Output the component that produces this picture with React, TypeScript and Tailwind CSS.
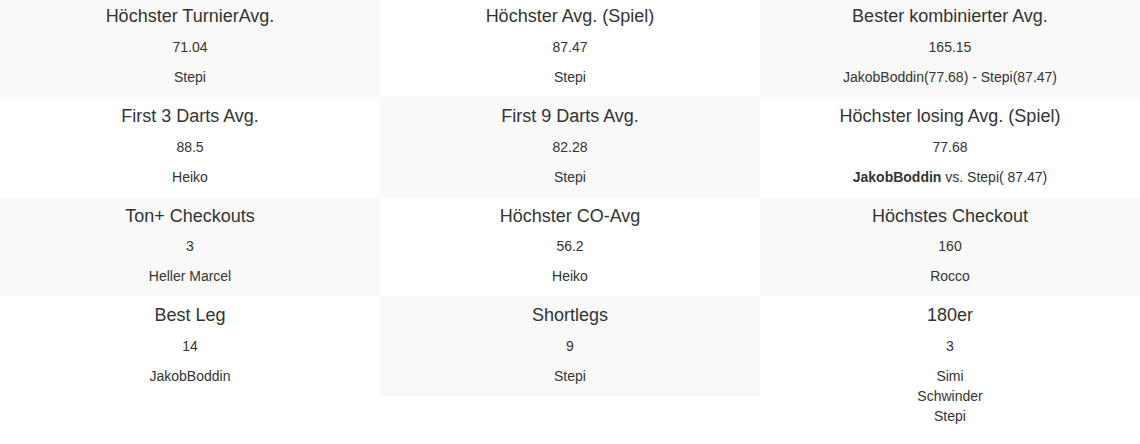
type Stat = {
  title: string;
  value: string;
  names: React.ReactNode[];
};

const stats: Stat[] = [
  { title: "Höchster TurnierAvg.", value: "71.04", names: ["Stepi"] },
  { title: "Höchster Avg. (Spiel)", value: "87.47", names: ["Stepi"] },
  { title: "Bester kombinierter Avg.", value: "165.15", names: ["JakobBoddin(77.68) - Stepi(87.47)"] },
  { title: "First 3 Darts Avg.", value: "88.5", names: ["Heiko"] },
  { title: "First 9 Darts Avg.", value: "82.28", names: ["Stepi"] },
  {
    title: "Höchster losing Avg. (Spiel)",
    value: "77.68",
    names: [
      <>
        <b>JakobBoddin</b> vs. Stepi( 87.47)
      </>,
    ],
  },
  { title: "Ton+ Checkouts", value: "3", names: ["Heller Marcel"] },
  { title: "Höchster CO-Avg", value: "56.2", names: ["Heiko"] },
  { title: "Höchstes Checkout", value: "160", names: ["Rocco"] },
  { title: "Best Leg", value: "14", names: ["JakobBoddin"] },
  { title: "Shortlegs", value: "9", names: ["Stepi"] },
  { title: "180er", value: "3", names: ["Simi", "Schwinder", "Stepi"] },
];

function StatCell({ stat, striped }: { stat: Stat; striped: boolean }) {
  return (
    <div className={`text-center ${striped ? "bg-[#f9f9f9]" : "bg-white"}`}>
      <h4 className="pt-[10px] pb-[10px] text-[18px] leading-[19.8px] font-normal">{stat.title}</h4>
      <p className="mb-[10px] text-[14px] leading-[20px]">{stat.value}</p>
      <p className="pb-[10px] text-[14px] leading-[20px]">
        {stat.names.map((n, i) => (
          <span key={i} className="block">
            {n}
          </span>
        ))}
      </p>
    </div>
  );
}

export default function App() {
  return (
    <div className="w-[1140px] h-[444px] overflow-hidden bg-white text-[#333] font-['Liberation_Sans',Arial,sans-serif]">
      <div className="-mt-[3px] grid grid-cols-3 items-start">
        {stats.map((s, i) => (
          <StatCell key={i} stat={s} striped={i % 2 === 0} />
        ))}
      </div>
    </div>
  );
}
